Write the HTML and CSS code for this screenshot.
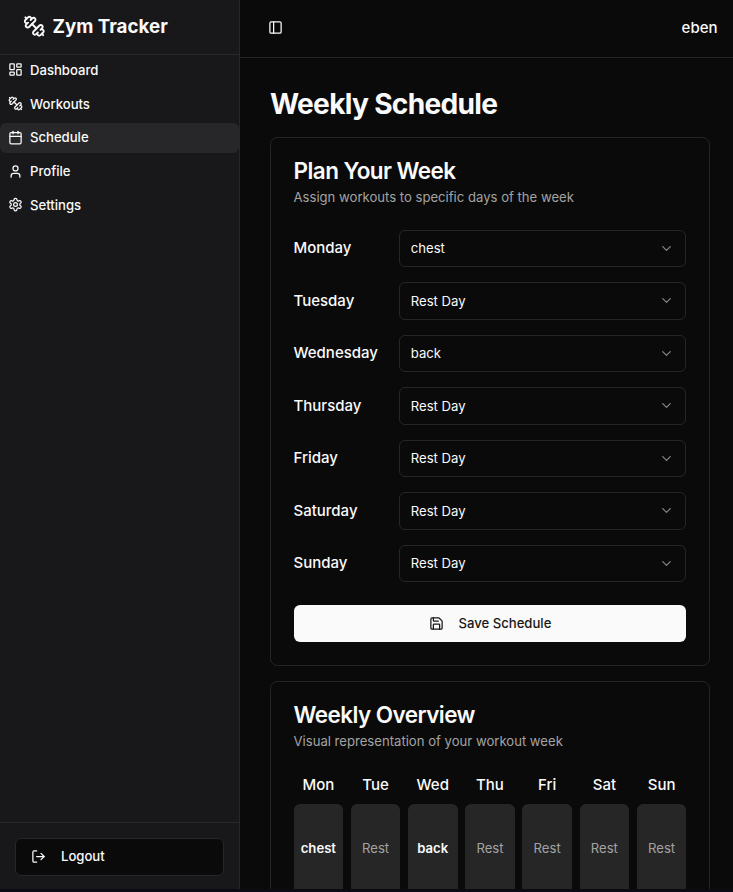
FILE: index.html
```html
<!DOCTYPE html>
<html lang="en">
<head>
    <meta charset="UTF-8">
    <meta name="viewport" content="width=device-width, initial-scale=1.0">
    <title>Zym Tracker</title>
    <link rel="stylesheet" href="styles.css">
</head>
<body>
    <div class="app">
        <aside class="sidebar">
            <div class="brand">
                <svg class="icon brand-icon" viewBox="0 0 24 24"><path d="M14.4 14.4 9.6 9.6"/><path d="M18.657 21.485a2 2 0 1 1-2.829-2.828l-1.767 1.768a2 2 0 1 1-2.829-2.829l6.364-6.364a2 2 0 1 1 2.829 2.829l-1.768 1.767a2 2 0 1 1 2.828 2.829z"/><path d="m21.5 21.5-1.4-1.4"/><path d="M3.9 3.9 2.5 2.5"/><path d="M6.404 12.768a2 2 0 1 1-2.829-2.829l1.768-1.767a2 2 0 1 1-2.828-2.829l2.828-2.828a2 2 0 1 1 2.829 2.828l1.767-1.768a2 2 0 1 1 2.829 2.829z"/></svg>
                <span>Zym Tracker</span>
            </div>
            <nav class="nav">
                <a class="nav-item">
                    <svg class="icon" viewBox="0 0 24 24"><rect x="3" y="3" width="7" height="9" rx="1"/><rect x="14" y="3" width="7" height="5" rx="1"/><rect x="14" y="12" width="7" height="9" rx="1"/><rect x="3" y="16" width="7" height="5" rx="1"/></svg>
                    Dashboard
                </a>
                <a class="nav-item">
                    <svg class="icon" viewBox="0 0 24 24"><path d="M14.4 14.4 9.6 9.6"/><path d="M18.657 21.485a2 2 0 1 1-2.829-2.828l-1.767 1.768a2 2 0 1 1-2.829-2.829l6.364-6.364a2 2 0 1 1 2.829 2.829l-1.768 1.767a2 2 0 1 1 2.828 2.829z"/><path d="m21.5 21.5-1.4-1.4"/><path d="M3.9 3.9 2.5 2.5"/><path d="M6.404 12.768a2 2 0 1 1-2.829-2.829l1.768-1.767a2 2 0 1 1-2.828-2.829l2.828-2.828a2 2 0 1 1 2.829 2.828l1.767-1.768a2 2 0 1 1 2.829 2.829z"/></svg>
                    Workouts
                </a>
                <a class="nav-item active">
                    <svg class="icon" viewBox="0 0 24 24"><path d="M8 2v4"/><path d="M16 2v4"/><rect x="3" y="4" width="18" height="18" rx="2"/><path d="M3 10h18"/></svg>
                    Schedule
                </a>
                <a class="nav-item">
                    <svg class="icon" viewBox="0 0 24 24"><path d="M19 21v-2a4 4 0 0 0-4-4H9a4 4 0 0 0-4 4v2"/><circle cx="12" cy="7" r="4"/></svg>
                    Profile
                </a>
                <a class="nav-item">
                    <svg class="icon" viewBox="0 0 24 24"><path d="M12.22 2h-.44a2 2 0 0 0-2 2v.18a2 2 0 0 1-1 1.73l-.43.25a2 2 0 0 1-2 0l-.15-.08a2 2 0 0 0-2.73.73l-.22.38a2 2 0 0 0 .73 2.73l.15.1a2 2 0 0 1 1 1.72v.51a2 2 0 0 1-1 1.74l-.15.09a2 2 0 0 0-.73 2.73l.22.38a2 2 0 0 0 2.73.73l.15-.08a2 2 0 0 1 2 0l.43.25a2 2 0 0 1 1 1.73V20a2 2 0 0 0 2 2h.44a2 2 0 0 0 2-2v-.18a2 2 0 0 1 1-1.73l.43-.25a2 2 0 0 1 2 0l.15.08a2 2 0 0 0 2.73-.73l.22-.39a2 2 0 0 0-.73-2.73l-.15-.08a2 2 0 0 1-1-1.74v-.5a2 2 0 0 1 1-1.74l.15-.09a2 2 0 0 0 .73-2.73l-.22-.38a2 2 0 0 0-2.73-.73l-.15.08a2 2 0 0 1-2 0l-.43-.25a2 2 0 0 1-1-1.73V4a2 2 0 0 0-2-2z"/><circle cx="12" cy="12" r="3"/></svg>
                    Settings
                </a>
            </nav>
            <div class="sidebar-footer">
                <button class="logout" type="button">
                    <svg class="icon" viewBox="0 0 24 24"><path d="m16 17 5-5-5-5"/><path d="M21 12H9"/><path d="M9 21H5a2 2 0 0 1-2-2V5a2 2 0 0 1 2-2h4"/></svg>
                    Logout
                </button>
            </div>
        </aside>

        <div class="content">
            <header class="topbar">
                <svg class="icon" viewBox="0 0 24 24"><rect x="3" y="3" width="18" height="18" rx="2"/><path d="M9 3v18"/></svg>
                <span class="username">eben</span>
            </header>
            <main class="main">
                <h1>Weekly Schedule</h1>

                <section class="card">
                    <h2>Plan Your Week</h2>
                    <p class="card-desc">Assign workouts to specific days of the week</p>
                    <div class="days">
                        <div class="day-row">
                            <span class="day-name">Monday</span>
                            <div class="select">chest <svg class="icon chevron" viewBox="0 0 24 24"><path d="m6 9 6 6 6-6"/></svg></div>
                        </div>
                        <div class="day-row">
                            <span class="day-name">Tuesday</span>
                            <div class="select">Rest Day <svg class="icon chevron" viewBox="0 0 24 24"><path d="m6 9 6 6 6-6"/></svg></div>
                        </div>
                        <div class="day-row">
                            <span class="day-name">Wednesday</span>
                            <div class="select">back <svg class="icon chevron" viewBox="0 0 24 24"><path d="m6 9 6 6 6-6"/></svg></div>
                        </div>
                        <div class="day-row">
                            <span class="day-name">Thursday</span>
                            <div class="select">Rest Day <svg class="icon chevron" viewBox="0 0 24 24"><path d="m6 9 6 6 6-6"/></svg></div>
                        </div>
                        <div class="day-row">
                            <span class="day-name">Friday</span>
                            <div class="select">Rest Day <svg class="icon chevron" viewBox="0 0 24 24"><path d="m6 9 6 6 6-6"/></svg></div>
                        </div>
                        <div class="day-row">
                            <span class="day-name">Saturday</span>
                            <div class="select">Rest Day <svg class="icon chevron" viewBox="0 0 24 24"><path d="m6 9 6 6 6-6"/></svg></div>
                        </div>
                        <div class="day-row">
                            <span class="day-name">Sunday</span>
                            <div class="select">Rest Day <svg class="icon chevron" viewBox="0 0 24 24"><path d="m6 9 6 6 6-6"/></svg></div>
                        </div>
                    </div>
                    <button class="save" type="button">
                        <svg class="icon" viewBox="0 0 24 24"><path d="M15.2 3a2 2 0 0 1 1.4.6l3.8 3.8a2 2 0 0 1 .6 1.4V19a2 2 0 0 1-2 2H5a2 2 0 0 1-2-2V5a2 2 0 0 1 2-2z"/><path d="M17 21v-7a1 1 0 0 0-1-1H8a1 1 0 0 0-1 1v7"/><path d="M7 3v4a1 1 0 0 0 1 1h7"/></svg>
                        Save Schedule
                    </button>
                </section>

                <section class="card">
                    <h2>Weekly Overview</h2>
                    <p class="card-desc">Visual representation of your workout week</p>
                    <div class="week">
                        <div class="week-day"><span class="week-name">Mon</span><div class="tile filled">chest</div></div>
                        <div class="week-day"><span class="week-name">Tue</span><div class="tile">Rest</div></div>
                        <div class="week-day"><span class="week-name">Wed</span><div class="tile filled">back</div></div>
                        <div class="week-day"><span class="week-name">Thu</span><div class="tile">Rest</div></div>
                        <div class="week-day"><span class="week-name">Fri</span><div class="tile">Rest</div></div>
                        <div class="week-day"><span class="week-name">Sat</span><div class="tile">Rest</div></div>
                        <div class="week-day"><span class="week-name">Sun</span><div class="tile">Rest</div></div>
                    </div>
                </section>
            </main>
        </div>
    </div>
</body>
</html>
```

FILE: styles.css
```css
html {
    font-size: 15px;
}
body {
    margin: 0;
    height: 892px;
    overflow: hidden;
    background: #0c0a14;
    color: #fafafa;
    font-family: Inter, "Liberation Sans", sans-serif;
}
button {
    font-family: inherit;
}
.icon {
    width: 15px;
    height: 15px;
    flex-shrink: 0;
    fill: none;
    stroke: currentColor;
    stroke-width: 2;
    stroke-linecap: round;
    stroke-linejoin: round;
}
.app {
    display: flex;
    align-items: flex-start;
    height: 889px;
    overflow: hidden;
    background: #0a0a0a;
}

.sidebar {
    display: flex;
    flex-direction: column;
    box-sizing: border-box;
    width: 240px;
    height: 890.5px;
    flex-shrink: 0;
    background: #18181b;
    border-right: 1px solid #27272a;
}
.brand {
    display: flex;
    align-items: center;
    gap: 7.5px;
    box-sizing: border-box;
    height: 55px;
    padding: 0 0 2px 22.5px;
    border-bottom: 1px solid #27272a;
    font-size: 18.75px;
    font-weight: 700;
}
.brand-icon {
    width: 22.5px;
    height: 22.5px;
}
.nav {
    flex: 1;
    display: flex;
    flex-direction: column;
    gap: 3.75px;
}
.nav-item {
    display: flex;
    align-items: center;
    gap: 7.5px;
    box-sizing: border-box;
    height: 30px;
    padding: 0 7.5px 0.5px;
    border-radius: 6px;
    font-size: 13.125px;
    font-weight: 500;
}
.active {
    background: #27272a;
}
.sidebar-footer {
    padding: 15px;
    border-top: 1px solid #27272a;
}
.logout {
    display: flex;
    align-items: center;
    gap: 15px;
    box-sizing: border-box;
    width: 100%;
    height: 37.5px;
    padding: 0 15px 1px;
    background: #0a0a0a;
    border: 1px solid #27272a;
    border-radius: 6px;
    color: #fafafa;
    font-size: 13.125px;
    font-weight: 500;
}

.content {
    flex: 1;
    min-width: 0;
}
.topbar {
    display: flex;
    align-items: center;
    justify-content: space-between;
    box-sizing: border-box;
    height: 58px;
    padding: 0 15.5px 3px 28px;
    border-bottom: 1px solid #262626;
}
.username {
    font-size: 15px;
    font-weight: 500;
}
.main {
    padding: 30px 23.08px 0 30px;
}
h1 {
    margin: 0 0 15px;
    font-size: 28.125px;
    line-height: 33.75px;
    font-weight: 700;
    letter-spacing: -0.025em;
}
.card {
    margin-bottom: 15px;
    padding: 22.5px;
    border: 1px solid #262626;
    border-radius: 7.5px;
}
h2 {
    margin: 0 0 5.625px;
    font-size: 22.5px;
    line-height: 22.5px;
    font-weight: 600;
    letter-spacing: -0.025em;
}
.card-desc {
    margin: 0 0 22.5px;
    color: #a3a3a3;
    font-size: 13.125px;
    line-height: 18.75px;
}
.days {
    display: flex;
    flex-direction: column;
    gap: 15px;
}
.day-row {
    display: flex;
    align-items: center;
    gap: 15px;
}
.day-name {
    width: 90px;
    flex-shrink: 0;
    padding-bottom: 1px;
    font-size: 15px;
    font-weight: 500;
}
.select {
    flex: 1;
    display: flex;
    align-items: center;
    justify-content: space-between;
    box-sizing: border-box;
    height: 37.5px;
    padding: 0 11.25px;
    border: 1px solid #262626;
    border-radius: 6px;
    font-size: 13.125px;
}
.chevron {
    opacity: 0.5;
}
.save {
    display: flex;
    align-items: center;
    justify-content: center;
    gap: 15px;
    width: 100%;
    height: 37.5px;
    margin-top: 22.5px;
    background: #fafafa;
    border: 0;
    border-radius: 6px;
    color: #171717;
    font-size: 13.125px;
    font-weight: 500;
}
.week {
    display: grid;
    grid-template-columns: repeat(7, 1fr);
    gap: 7.5px;
}
.week-day {
    display: flex;
    flex-direction: column;
    gap: 7.5px;
    text-align: center;
}
.week-name {
    font-size: 15px;
    line-height: 22.5px;
    font-weight: 500;
}
.tile {
    display: flex;
    align-items: center;
    justify-content: center;
    height: 90px;
    padding-bottom: 1px;
    box-sizing: border-box;
    background: #262626;
    border-radius: 6px;
    color: #a3a3a3;
    font-size: 13.125px;
}
.filled {
    color: #fafafa;
    font-weight: 600;
}
```
